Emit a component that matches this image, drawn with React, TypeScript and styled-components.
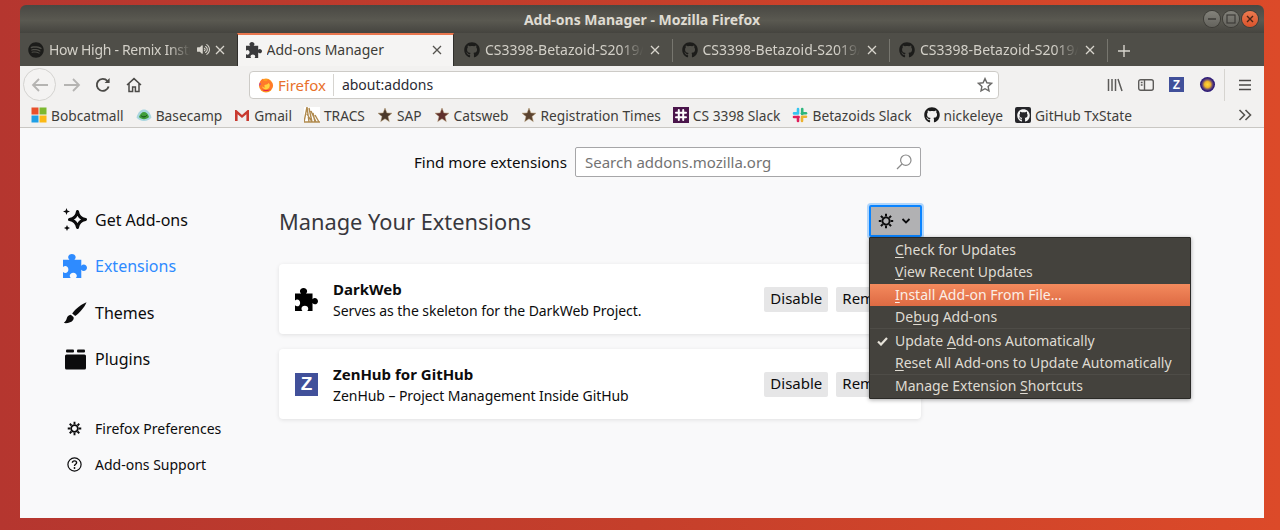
import React from 'react'
import styled, { createGlobalStyle } from 'styled-components'
import { FaGithub, FaSpotify, FaVolumeUp } from 'react-icons/fa'

const PUZZLE =
  'M2 7H7.6C6.9 6.4 6.5 5.7 6.5 4.9C6.5 3.3 7.9 2 9.8 2S13.1 3.3 13.1 4.9C13.1 5.7 12.7 6.4 12 7H18V12.2C18.6 11.5 19.4 11.1 20.1 11.1C21.7 11.1 23 12.4 23 14S21.7 16.9 20.1 16.9C19.4 16.9 18.6 16.5 18 15.8V23H13.2C13.8 22.4 14.1 21.7 14.1 21C14.1 19.5 12.8 18.3 11 18.3S7.9 19.5 7.9 21C7.9 21.7 8.2 22.4 8.8 23H2V17.8C2.6 18.4 3.3 18.7 4 18.7C5.5 18.7 6.7 17.4 6.7 15.6S5.5 12.5 4 12.5C3.3 12.5 2.6 12.8 2 13.4Z'

const Puzzle = ({ size, color }: { size: number; color: string }) => (
  <svg width={size} height={size} viewBox="2 2 21 21">
    <path d={PUZZLE} fill={color} />
  </svg>
)

const Gear = ({ size }: { size: number }) => (
  <svg width={size} height={size} viewBox="0 0 16 16" fill="none" stroke="#0c0c0d">
    <circle cx="8" cy="8" r="3.6" strokeWidth="1.9" />
    <path
      d="M8 .8v2.6M8 12.6v2.6M.8 8h2.6M12.6 8h2.6M2.9 2.9l1.9 1.9M11.2 11.2l1.9 1.9M13.1 2.9l-1.9 1.9M4.8 11.2l-1.9 1.9"
      strokeWidth="2"
    />
  </svg>
)

const CloseX = ({ color }: { color: string }) => (
  <svg width="10" height="10" viewBox="0 0 10 10" fill="none" stroke={color} strokeWidth="1.3">
    <path d="M1 1l8 8M9 1l-8 8" />
  </svg>
)

const Star = ({ color }: { color: string }) => (
  <svg width="16" height="16" viewBox="0 0 16 16">
    <path d="M8 1l1.9 4.9 5.1.3-4 3.3 1.3 5.1L8 11.8l-4.3 2.8L5 9.5 1 6.2l5.1-.3z" fill={color} stroke="#b49a72" strokeWidth=".5" />
  </svg>
)

const FirefoxLogo = () => (
  <svg width="16" height="16" viewBox="0 0 16 16">
    <circle cx="8" cy="8.6" r="7" fill="#ff9a1f" />
    <path d="M1.2 8.2C1.4 4.8 3 2.4 5.2 1.4 4.8 2.6 5.2 3.6 6.4 4 8 4.6 9.6 4 9.8 2.4c2.6 1.2 5 3.4 5.2 6.4-1 3.6-3.6 5.6-7 5.6-3.4 0-6-2.4-6.8-6.2z" fill="#ff7a2a" />
    <path d="M11.8 8.6c0 2.2-1.7 3.8-3.9 3.8-2 0-3.6-1.3-3.9-3.1 1 1.1 2.2 1.4 3.4 1.1C6.2 9.6 6 8.5 6.9 7.7c1.6.3 2.9-.2 3.5-1.6.9.5 1.4 1.5 1.4 2.5z" fill="#ffd23e" />
    <path d="M4 12.4c2.5 2.4 6.8 2.2 9-.4-2 1-5.6 1.4-9 .4z" fill="#e3234f" />
    <path d="M2 5.4C1.4 6.6 1 7.7 1 8.9c.7-.8 1.5-1.4 2.2-1.6-.6-.5-1-1.1-1.2-1.9z" fill="#b33dc6" />
  </svg>
)

const WindowsSquares = () => (
  <svg width="16" height="16" viewBox="0 0 16 16">
    <rect x="0.5" y="0.5" width="7" height="7" fill="#e8502c" />
    <rect x="8.5" y="0.5" width="7" height="7" fill="#7cb82f" />
    <rect x="0.5" y="8.5" width="7" height="7" fill="#1f9fe6" />
    <rect x="8.5" y="8.5" width="7" height="7" fill="#fbb915" />
  </svg>
)

const BasecampLogo = () => (
  <svg width="16" height="16" viewBox="0 0 16 16">
    <path d="M0.5 10.5C2 5 5 2.5 8 2.5s6 2.5 7.5 8c-1.6 2.2-4.4 3.4-7.5 3.4s-5.9-1.2-7.5-3.4z" fill="#a9d6df" />
    <path d="M3 10c1-3 3-5 5-5s4 1.6 5 5c-1.2 1.4-3 2.2-5 2.2S4.2 11.4 3 10z" fill="#3f9e3a" />
    <path d="M5.2 8.8c1.5 1.6 4 1.6 5.6-.4" fill="none" stroke="#14461a" strokeWidth="1" />
  </svg>
)

const GmailLogo = () => (
  <svg width="16" height="16" viewBox="0 0 16 16">
    <rect x="1" y="3" width="14" height="11" fill="#eeeeee" />
    <path d="M1 14V3h1.4L8 8l5.6-5H15v11h-2.6V7.3L8 11 3.6 7.3V14z" fill="#c8392f" />
  </svg>
)

const TracsLogo = () => (
  <svg width="16" height="16" viewBox="0 0 16 16">
    <rect width="16" height="16" fill="#fff" />
    <path d="M0 15L3 0l2 15M3 7l5 8M5 1l3 14M7 4l5 11M9 6l2 9M11 8l4 7M0 15h16" fill="none" stroke="#b08a4e" strokeWidth="1.4" />
  </svg>
)

const SlackSquare = () => (
  <svg width="16" height="16" viewBox="0 0 16 16">
    <rect width="16" height="16" fill="#4a154b" />
    <path d="M5.8 3v10M10.2 3v10M3 5.8h10M3 10.2h10" stroke="#fff" strokeWidth="2" strokeLinecap="round" />
  </svg>
)

const SlackColor = () => (
  <svg width="16" height="16" viewBox="0 0 16 16" fill="none" strokeWidth="2.6" strokeLinecap="round">
    <path d="M6 2v4.4H2" stroke="#36c5f0" strokeLinejoin="round" />
    <path d="M10.2 2v5" stroke="#2eb67d" />
    <path d="M14 6.2H10" stroke="#2eb67d" />
    <path d="M2 10h4.6" stroke="#e01e5a" />
    <path d="M6 10v4" stroke="#e01e5a" />
    <path d="M10 9.8h4M10 10v4" stroke="#ecb22e" />
  </svg>
)

const GithubSquare = () => (
  <SquareIcon>
    <FaGithub size={13} color="#f4f4f4" />
  </SquareIcon>
)

const App: React.FC = () => {
  const tabs = ['CS3398-Betazoid-S2019/', 'CS3398-Betazoid-S2019/', 'CS3398-Betazoid-S2019/']

  return (
    <Desktop>
      <GlobalStyle />
      <Window>
        <TitleBar>
          <span />
          <Title>Add-ons Manager - Mozilla Firefox</Title>
          <WindowControls>
            <WindowButton>
              <svg width="10" height="10" viewBox="0 0 10 10"><path d="M1 5h8" stroke="#3c3b37" strokeWidth="1.5" /></svg>
            </WindowButton>
            <WindowButton>
              <svg width="10" height="10" viewBox="0 0 10 10"><rect x="1" y="1" width="8" height="8" fill="none" stroke="#3c3b37" strokeWidth="1.2" /></svg>
            </WindowButton>
            <WindowButton $close>
              <svg width="10" height="10" viewBox="0 0 10 10"><path d="M2 2l6 6M8 2l-6 6" stroke="#4a2516" strokeWidth="1.4" /></svg>
            </WindowButton>
          </WindowControls>
        </TitleBar>

        <TabBar>
          <FirstTab>
            <FaSpotify size={16} color="#1c1c1a" />
            <FirstTabLabel>How High - Remix Instrumental</FirstTabLabel>
            <FaVolumeUp size={13} color="#d8d5cd" />
            <CloseX color="#d8d5cd" />
          </FirstTab>
          <ActiveTab>
            <Puzzle size={16} color="#3a3a3c" />
            <TabLabel $active>Add-ons Manager</TabLabel>
            <CloseX color="#55534f" />
          </ActiveTab>
          {tabs.map((t, i) => (
            <Tab key={i} $divided={i > 0}>
              <FaGithub size={16} color="#1c1c1a" />
              <TabLabel>{t}CS3398</TabLabel>
              <CloseX color="#d8d5cd" />
            </Tab>
          ))}
          <NewTab>
            <svg width="14" height="14" viewBox="0 0 14 14"><path d="M7 1v12M1 7h12" stroke="#d8d5cd" strokeWidth="1.4" /></svg>
          </NewTab>
        </TabBar>

        <Toolbar>
          <BackButton>
            <svg width="18" height="16" viewBox="0 0 18 16" fill="none" stroke="#b5b4b2" strokeWidth="1.8"><path d="M17 8H2M8 2L2 8l6 6" /></svg>
          </BackButton>
          <NavButton>
            <svg width="18" height="16" viewBox="0 0 18 16" fill="none" stroke="#b5b4b2" strokeWidth="1.8"><path d="M1 8h15M10 2l6 6-6 6" /></svg>
          </NavButton>
          <NavButton>
            <svg width="16" height="16" viewBox="0 0 16 16" fill="none" stroke="#4b4a47" strokeWidth="1.9"><path d="M13.6 9.5A6 6 0 1 1 12.4 4" /><path d="M14.6 1v5h-5z" fill="#4b4a47" stroke="none" /></svg>
          </NavButton>
          <NavButton>
            <svg width="16" height="16" viewBox="0 0 16 16" fill="none" stroke="#4b4a47" strokeWidth="1.5"><path d="M1 8l7-6.4L15 8M3 6.5V14.5h3.6V10h2.8v4.5H13V6.5" /></svg>
          </NavButton>
          <UrlBar>
            <FirefoxLogo />
            <UrlBrand>Firefox</UrlBrand>
            <UrlDivider />
            <UrlText>about:addons</UrlText>
            <svg width="16" height="16" viewBox="0 0 16 16"><path d="M8 1.6l1.9 4.2 4.6.5-3.4 3.1.9 4.5L8 11.7l-4 2.2.9-4.5L1.5 6.3l4.6-.5z" fill="none" stroke="#6b6a68" strokeWidth="1.4" /></svg>
          </UrlBar>
          <ToolbarEnd>
            <NavButton>
              <svg width="16" height="16" viewBox="0 0 16 16" stroke="#5c5b59" strokeWidth="1.5"><path d="M1.5 2v12M5 2v12M8.5 2v12M11 2l4 12" /></svg>
            </NavButton>
            <NavButton>
              <svg width="16" height="14" viewBox="0 0 16 14" fill="none" stroke="#5c5b59" strokeWidth="1.4"><rect x=".7" y="1.7" width="14.6" height="10.6" rx="2" /><path d="M6.5 2v10M2.8 4.5h1.8M2.8 7h1.8" /></svg>
            </NavButton>
            <NavButton>
              <ZLogo $size={15}>Z</ZLogo>
            </NavButton>
            <NavButton>
              <BallIcon />
            </NavButton>
            <ToolbarDivider />
            <MenuButton>
              <svg width="12" height="12" viewBox="0 0 12 12" stroke="#4b4a47" strokeWidth="1.6"><path d="M0 1.5h12M0 6h12M0 10.5h12" /></svg>
            </MenuButton>
          </ToolbarEnd>
        </Toolbar>

        <Bookmarks>
          <Bookmark><WindowsSquares />Bobcatmall</Bookmark>
          <Bookmark><BasecampLogo />Basecamp</Bookmark>
          <Bookmark><GmailLogo />Gmail</Bookmark>
          <Bookmark><TracsLogo />TRACS</Bookmark>
          <Bookmark><Star color="#4c3a2b" />SAP</Bookmark>
          <Bookmark><Star color="#5f2f2c" />Catsweb</Bookmark>
          <Bookmark><Star color="#5b4330" />Registration Times</Bookmark>
          <Bookmark><SlackSquare />CS 3398 Slack</Bookmark>
          <Bookmark><SlackColor />Betazoids Slack</Bookmark>
          <Bookmark><FaGithub size={16} color="#1b1b1b" />nickeleye</Bookmark>
          <Bookmark><GithubSquare />GitHub TxState</Bookmark>
          <Overflow>
            <svg width="14" height="12" viewBox="0 0 14 12" fill="none" stroke="#55534f" strokeWidth="1.6"><path d="M1.5 1l5 5-5 5M7.5 1l5 5-5 5" /></svg>
          </Overflow>
        </Bookmarks>

        <Content>
          <Sidebar>
            <SideItem>
              <SideIcon>
                <svg width="24" height="24" viewBox="0 0 24 24" fill="none">
                  <path d="M14.5 3.5c.7 4.5 3.5 7.3 8 8-4.5.7-7.3 3.5-8 8-.7-4.5-3.5-7.3-8-8 4.5-.7 7.3-3.5 8-8z" stroke="#0c0c0d" strokeWidth="3" strokeLinejoin="round" />
                  <path d="M3.5 0l.9 2.6L7 3.5l-2.6.9L3.5 7l-.9-2.6L0 3.5l2.6-.9zM4 17l.9 2.1L7 20l-2.1.9L4 23l-.9-2.1L1 20l2.1-.9z" fill="#0c0c0d" />
                </svg>
              </SideIcon>
              Get Add-ons
            </SideItem>
            <SideItem $selected>
              <SideIcon><Puzzle size={24} color="#2e8bff" /></SideIcon>
              Extensions
            </SideItem>
            <SideItem>
              <SideIcon>
                <svg width="24" height="24" viewBox="0 0 24 24" fill="#0c0c0d">
                  <path d="M23.5 1.2C18 3.5 12.5 7.8 9.2 12.4l3 2.7C16.8 11.6 21.4 6.5 23.5 1.2z" />
                  <path d="M7.8 13.8c-2.4.3-3.5 1.7-4 3.5-.4 1.7-1.3 3.3-3 4.7 3.5.5 7.7-.4 9.3-3 .9-1.5.7-2.7.1-3.3z" />
                </svg>
              </SideIcon>
              Themes
            </SideItem>
            <SideItem>
              <SideIcon>
                <svg width="24" height="24" viewBox="0 0 24 24" fill="#0c0c0d">
                  <rect x="2" y="7.5" width="21" height="15" rx="1.5" />
                  <rect x="3" y="2.5" width="8" height="3" rx="1" />
                  <rect x="14" y="2.5" width="8" height="3" rx="1" />
                </svg>
              </SideIcon>
              Plugins
            </SideItem>
            <SideLinks>
              <SideLink>
                <SideLinkIcon><Gear size={15} /></SideLinkIcon>
                Firefox Preferences
              </SideLink>
              <SideLink>
                <SideLinkIcon>
                  <svg width="15" height="15" viewBox="0 0 15 15" fill="none" stroke="#0c0c0d">
                    <circle cx="7.5" cy="7.5" r="6.6" strokeWidth="1.2" />
                    <path d="M5.4 5.8c0-1.2 1-1.9 2.1-1.9s2.1.7 2.1 1.8c0 1.6-2.1 1.5-2.1 3.2" strokeWidth="1.4" />
                    <circle cx="7.5" cy="11" r=".9" fill="#0c0c0d" stroke="none" />
                  </svg>
                </SideLinkIcon>
                Add-ons Support
              </SideLink>
            </SideLinks>
          </Sidebar>

          <Main>
            <SearchRow>
              <SearchLabel>Find more extensions</SearchLabel>
              <SearchBox>
                <SearchPlaceholder>Search addons.mozilla.org</SearchPlaceholder>
                <svg width="16" height="16" viewBox="0 0 16 16" fill="none" stroke="#8a8a8a" strokeWidth="1.2"><circle cx="9.8" cy="6.2" r="5.2" /><path d="M6 10l-5 5" /></svg>
              </SearchBox>
            </SearchRow>

            <HeaderRow>
              <Heading>Manage Your Extensions</Heading>
              <GearWrap>
                <GearButton>
                  <Gear size={16} />
                  <svg width="10" height="6" viewBox="0 0 10 6" fill="none" stroke="#0c0c0d" strokeWidth="1.8"><path d="M1.5 1l3.5 3.5L8.5 1" /></svg>
                </GearButton>
                <Menu>
                  <MenuItem><u>C</u>heck for Updates</MenuItem>
                  <MenuItem><u>V</u>iew Recent Updates</MenuItem>
                  <MenuItem $highlight><u>I</u>nstall Add-on From File…</MenuItem>
                  <MenuItem>De<u>b</u>ug Add-ons</MenuItem>
                  <MenuSeparator />
                  <MenuItem>
                    <MenuCheck>
                      <svg width="11" height="9" viewBox="0 0 11 9" fill="none" stroke="#e6e2d9" strokeWidth="2.2"><path d="M1 4.5l3 3L10 1" /></svg>
                    </MenuCheck>
                    Update <u>A</u>dd-ons Automatically
                  </MenuItem>
                  <MenuItem><u>R</u>eset All Add-ons to Update Automatically</MenuItem>
                  <MenuSeparator $tight />
                  <MenuItem>Manage Extension <u>S</u>hortcuts</MenuItem>
                </Menu>
              </GearWrap>
            </HeaderRow>

            <CardList>
              <Card>
                <CardIcon><Puzzle size={23} color="#000" /></CardIcon>
                <CardText>
                  <CardName>DarkWeb</CardName>
                  <CardDescription>Serves as the skeleton for the DarkWeb Project.</CardDescription>
                </CardText>
                <CardButton>Disable</CardButton>
                <CardButton>Remove</CardButton>
              </Card>
              <Card>
                <CardIcon><ZLogo $size={23}>Z</ZLogo></CardIcon>
                <CardText>
                  <CardName>ZenHub for GitHub</CardName>
                  <CardDescription>ZenHub – Project Management Inside GitHub</CardDescription>
                </CardText>
                <CardButton>Disable</CardButton>
                <CardButton>Remove</CardButton>
              </Card>
            </CardList>
          </Main>
        </Content>
      </Window>
    </Desktop>
  )
}

export default App

const UI_FONT = `"Noto Sans", "Open Sans", sans-serif`

const GlobalStyle = createGlobalStyle`
  html, body {
    margin: 0;
    padding: 0;
    height: 100%;
    overflow: hidden;
  }
  body {
    font-family: ${UI_FONT};
  }
`

const Desktop = styled.div`
  box-sizing: border-box;
  width: 1280px;
  height: 530px;
  padding: 5px 16px 12px 20px;
  background: linear-gradient(90deg, #b5362f 0%, #c53f2b 50%, #dc4a29 100%);
`

const Window = styled.div`
  display: flex;
  flex-direction: column;
  height: 100%;
  border-radius: 6px 6px 0 0;
  overflow: hidden;
`

const TitleBar = styled.div`
  display: grid;
  grid-template-columns: 1fr auto 1fr;
  align-items: center;
  height: 28px;
  background: linear-gradient(180deg, #494843 0%, #5a5951 55%, #45443f 100%);
`

const Title = styled.div`
  color: #dfdbd2;
  font-size: 14px;
  font-weight: 700;
  white-space: nowrap;
`

const WindowControls = styled.div`
  display: flex;
  justify-content: flex-end;
  gap: 3px;
  padding-right: 6px;
`

const WindowButton = styled.div<{ $close?: boolean }>`
  display: flex;
  align-items: center;
  justify-content: center;
  width: 16px;
  height: 16px;
  border-radius: 50%;
  background: ${p => (p.$close ? 'linear-gradient(180deg,#ee7a4f,#d9532c)' : 'linear-gradient(180deg,#83827b,#64635d)')};
  box-shadow: 0 0 0 1px #3d3c37;
`

const TabBar = styled.div`
  display: flex;
  height: 33px;
  background: #4f4e48;
`

const Tab = styled.div<{ $divided?: boolean }>`
  position: relative;
  box-sizing: border-box;
  display: flex;
  align-items: center;
  gap: 5px;
  flex: 0 0 217.5px;
  width: 217.5px;
  padding: 0 12px 0 10px;

  &::before {
    content: '';
    display: ${p => (p.$divided ? 'block' : 'none')};
    position: absolute;
    left: 0;
    top: 6px;
    bottom: 4px;
    width: 1px;
    background: #77766f;
  }
`

const FirstTab = styled(Tab)`
  flex-basis: 216.5px;
  width: 216.5px;
  padding-left: 8px;
`

const ActiveTab = styled(Tab)`
  background: #f5f4f3;
  border-top: 2px solid #e9764e;
  border-left: 1px solid #2f2e2b;
  border-right: 1px solid #2f2e2b;
  padding: 0 11px 2px 8px;
`

const TabLabel = styled.div<{ $active?: boolean }>`
  flex: 1;
  min-width: 0;
  overflow: hidden;
  white-space: nowrap;
  font-size: 14px;
  color: ${p => (p.$active ? '#3d3c38' : '#d3d0c8')};
  -webkit-mask-image: ${p => (p.$active ? 'none' : 'linear-gradient(90deg, #000 84%, transparent 99%)')};
  mask-image: ${p => (p.$active ? 'none' : 'linear-gradient(90deg, #000 84%, transparent 99%)')};
`

const FirstTabLabel = styled(TabLabel)`
  letter-spacing: -0.3px;
`

const NewTab = styled.div`
  display: flex;
  align-items: center;
  justify-content: center;
  width: 33px;
  border-left: 1px solid #77766f;
  margin: 6px 0 4px;
`

const Toolbar = styled.div`
  display: flex;
  align-items: center;
  height: 37px;
  padding-left: 3px;
  background: #f2f1f0;
`

const NavButton = styled.div`
  display: flex;
  align-items: center;
  justify-content: center;
  flex: none;
  width: 31px;
  height: 31px;
`

const BackButton = styled(NavButton)`
  box-sizing: border-box;
  width: 33px;
  height: 33px;
  border-radius: 50%;
  border: 1px solid #d4d3d0;
  background: #f4f3f2;
`

const UrlBar = styled.div`
  box-sizing: border-box;
  display: flex;
  align-items: center;
  flex: none;
  width: 750px;
  height: 28px;
  margin-left: 100px;
  padding: 0 5px 0 8px;
  background: #fff;
  border: 1px solid #cdcbc7;
  border-radius: 4px;
`

const UrlBrand = styled.span`
  margin-left: 4px;
  font-size: 15px;
  color: #e8702a;
`

const UrlDivider = styled.span`
  width: 1px;
  height: 22px;
  margin: 0 8px 0 7px;
  background: #d6d4d0;
`

const UrlText = styled.span`
  flex: 1;
  font-size: 14px;
  color: #2b2a33;
`

const ToolbarEnd = styled.div`
  display: flex;
  align-items: center;
  margin-left: auto;
  padding-right: 2px;
`

const ToolbarDivider = styled.div`
  width: 1px;
  height: 32px;
  margin: 0 3px 0 1px;
  background: #d6d4d0;
`

const MenuButton = styled(NavButton)`
  width: 34px;
`

const ZLogo = styled.div<{ $size: number }>`
  display: flex;
  align-items: center;
  justify-content: center;
  width: ${p => p.$size}px;
  height: ${p => p.$size}px;
  background: #41509a;
  color: #fff;
  font-family: "Liberation Sans", sans-serif;
  font-weight: 700;
  font-size: ${p => Math.round(p.$size * 0.82)}px;
`

const BallIcon = styled.div`
  width: 15px;
  height: 15px;
  border-radius: 50%;
  background: radial-gradient(circle, #ffd83a 0%, #f0b52c 28%, #6a4a70 48%, #2d1b7a 62%, #231560 100%);
`

const Bookmarks = styled.div`
  display: flex;
  align-items: center;
  gap: 12px;
  height: 25px;
  padding-left: 11px;
  background: #f2f1f0;
  border-bottom: 1px solid #c9c7c3;
  box-sizing: border-box;
`

const Bookmark = styled.div`
  display: flex;
  align-items: center;
  gap: 4px;
  font-size: 13.75px;
  color: #3f3e3b;
  white-space: nowrap;
`

const SquareIcon = styled.div`
  display: flex;
  align-items: center;
  justify-content: center;
  width: 16px;
  height: 16px;
  border-radius: 2px;
  background: #26262a;
`

const Overflow = styled.div`
  margin-left: auto;
  padding-right: 12px;
  display: flex;
`

const Content = styled.div`
  flex: 1;
  display: flex;
  min-height: 0;
  background: #f9f9fa;
  color: #0c0c0d;
`

const Sidebar = styled.div`
  box-sizing: border-box;
  flex: none;
  width: 259px;
  padding: 69px 0 0 43px;
`

const SideIcon = styled.span`
  display: flex;
  align-items: center;
  justify-content: center;
  flex: none;
  width: 24px;
  margin-right: 8px;
`

const SideLinkIcon = styled(SideIcon)`
  justify-content: flex-start;
  width: 20px;
  padding-left: 4px;
`

const SideItem = styled.div<{ $selected?: boolean }>`
  display: flex;
  align-items: center;
  height: 46.3px;
  font-size: 16px;
  color: ${p => (p.$selected ? '#2e8bff' : '#0c0c0d')};
`

const SideLinks = styled.div`
  margin-top: 28px;
`

const SideLink = styled.div`
  display: flex;
  align-items: center;
  height: 36.5px;
  font-size: 14px;
`

const Main = styled.div`
  flex: none;
  width: 642px;
  padding-top: 19px;
`

const SearchRow = styled.div`
  display: flex;
  align-items: center;
  justify-content: flex-end;
  gap: 8px;
`

const SearchLabel = styled.span`
  font-size: 15.2px;
  padding-bottom: 1px;
`

const SearchBox = styled.div`
  box-sizing: border-box;
  display: flex;
  align-items: center;
  justify-content: space-between;
  width: 346px;
  height: 30px;
  padding: 0 8px 0 9px;
  background: #fff;
  border: 1px solid #a6a6a8;
  border-radius: 2px;
`

const SearchPlaceholder = styled.span`
  font-size: 15px;
  color: #737373;
`

const HeaderRow = styled.div`
  display: flex;
  align-items: center;
  justify-content: space-between;
  height: 32px;
  margin-top: 28px;
`

const Heading = styled.h1`
  margin: 0;
  font-size: 21.8px;
  font-weight: 400;
  color: #38383d;
`

const GearWrap = styled.div`
  position: relative;
  margin-right: -1px;
`

const GearButton = styled.div`
  box-sizing: border-box;
  display: flex;
  align-items: center;
  gap: 7px;
  width: 53px;
  height: 32px;
  padding-left: 7px;
  background: #b1b1b3;
  border: 2px solid #0a84ff;
  border-radius: 2px;
  box-shadow: 0 0 0 2px rgba(10, 132, 255, 0.3);
`

const Menu = styled.div`
  position: absolute;
  top: 100%;
  left: 0;
  z-index: 2;
  box-sizing: border-box;
  width: 322px;
  padding: 1px 0 1px;
  background: #44423d;
  border: 1px solid #2b2a27;
  border-radius: 1px;
  box-shadow: 0 1px 4px rgba(0, 0, 0, 0.35);
`

const MenuItem = styled.div<{ $highlight?: boolean }>`
  position: relative;
  box-sizing: border-box;
  display: flex;
  align-items: center;
  white-space: pre;
  height: 22px;
  padding: 0 0 2px 25px;
  font-size: 14px;
  color: ${p => (p.$highlight ? '#fbeee6' : '#dfdbd2')};
  background: ${p => (p.$highlight ? 'linear-gradient(180deg, #f48a5d 0%, #dd6a43 100%)' : 'none')};
  margin-top: ${p => (p.$highlight ? '1px' : '0')};

  u {
    text-underline-offset: 2px;
  }
`

const MenuCheck = styled.span`
  position: absolute;
  left: 7px;
  top: 7px;
  display: flex;
`

const MenuSeparator = styled.div<{ $tight?: boolean }>`
  height: 1px;
  margin-bottom: ${p => (p.$tight ? '0' : '1px')};
  background: #4e4c47;
`

const CardList = styled.div`
  display: flex;
  flex-direction: column;
  gap: 15px;
  margin-top: 27px;
`

const Card = styled.div`
  box-sizing: border-box;
  display: flex;
  align-items: center;
  gap: 8px;
  height: 70px;
  padding: 0 16px 0 16px;
  background: #fff;
  border-radius: 4px;
  box-shadow: 0 1px 4px rgba(12, 12, 13, 0.1);
`

const CardIcon = styled.div`
  display: flex;
  flex: none;
  width: 24px;
  margin-right: 6px;
`

const CardText = styled.div`
  flex: 1;
  min-width: 0;
  padding-top: 2px;
`

const CardName = styled.div`
  font-size: 15px;
  font-weight: 700;
  line-height: 21px;
`

const CardDescription = styled.div`
  font-size: 14px;
  line-height: 21px;
  letter-spacing: -0.06px;
`

const CardButton = styled.div`
  box-sizing: border-box;
  display: flex;
  align-items: center;
  justify-content: center;
  flex: none;
  height: 25px;
  padding: 0 6px 2px;
  background: #e6e6e7;
  border-radius: 2px;
  font-size: 15px;
`
